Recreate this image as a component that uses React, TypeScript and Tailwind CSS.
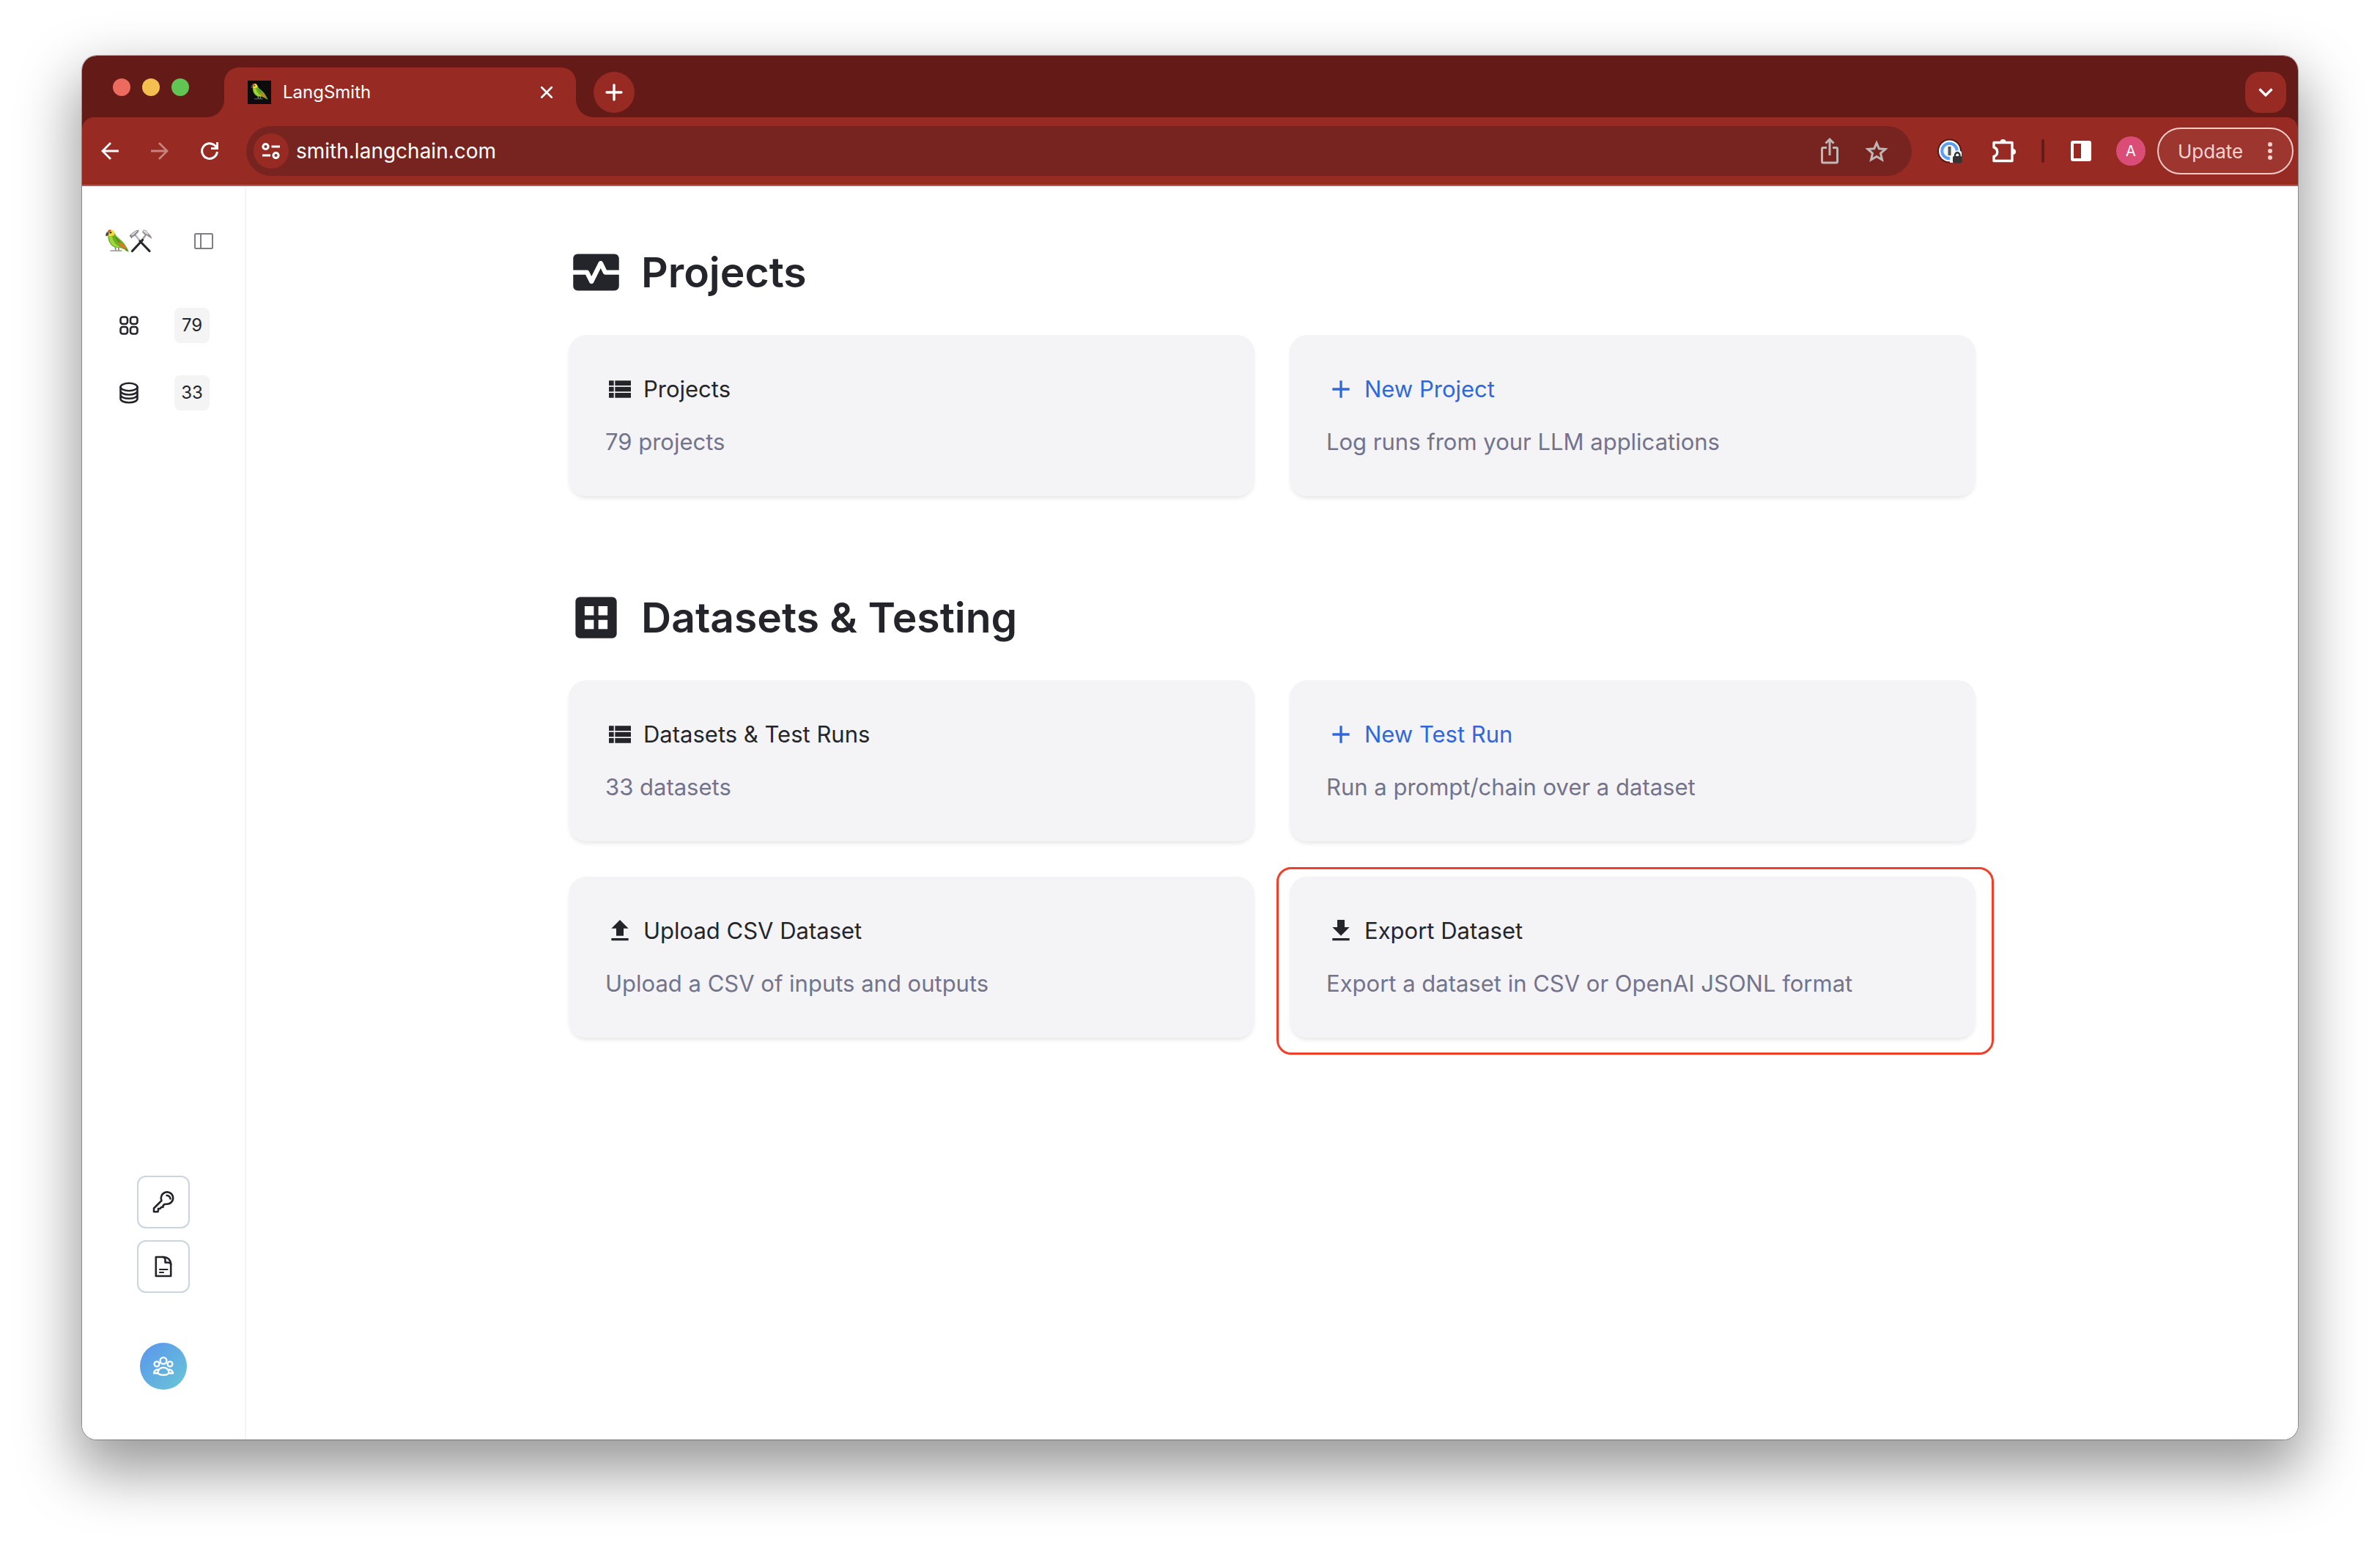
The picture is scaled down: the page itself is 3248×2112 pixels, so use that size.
import { MdMonitorHeart, MdDataset, MdViewList, MdAdd, MdUpload, MdDownload } from "react-icons/md";
import type { ReactNode } from "react";

function ParrotShape() {
  return (
    <>
      <path d="M7 29.200H22" stroke="#7f8078" strokeWidth="1.200" strokeLinecap="round" />
      <path d="M13 22L14 28.500M18 23V28.500" stroke="#8d8c7c" strokeWidth="1.800" />
      <path d="M3.500 8C3 12 4 17 7.500 21C10 24 14 25.500 20 25L26 27.500L31.500 30.500C31 27 28 23 25 18.500C22 14.500 17 11.500 14.500 8.500C13 6 11 1 7 .8Z" fill="#6cb022" />
      <path d="M5 10C5 15 7 19 10 21.500C13 24 17 24.500 20 24C14 21 10 16 9 10Z" fill="#a2d83a" />
      <path d="M12 9C15 14 19 19 24 24C22 18 17 13 12 9Z" fill="#4a8d17" />
      <path d="M17.500 17C21 18 25 20.500 28 25.500L28.500 27.500L24 26C21 24 18.500 21 17.500 17Z" fill="#e2762a" />
      <path d="M26.500 26L29 26.500L31.800 30.800L27.500 29Z" fill="#4c9a20" />
      <path d="M3 3C4 1 6 .2 8 .6C11 1.200 12.500 4 12.500 6.500C11 9 7 10.500 4 9Z" fill="#f0dc3c" />
      <path d="M3.200 1.800C4.500 .4 6.500 .2 7.600 .8L6 3.200L3 3.500Z" fill="#d8452d" />
      <path d="M3.500 3.500C1 3.500 0 5.500 .3 9C1.500 9.500 3 9 4.200 7.500L4.600 4Z" fill="#4d4a4a" />
      <circle cx="7" cy="4.200" r="1.300" fill="#33302a" />
    </>
  );
}

function Hammers() {
  return (
    <svg viewBox="0 0 32 32" className="size-8" fill="none" aria-hidden="true">
      <path d="M24 6L16 17" stroke="#9b9da1" strokeWidth="2.400" />
      <path d="M18.500 14.500L4.500 29.500" stroke="#26272b" strokeWidth="3.200" strokeLinecap="round" />
      <path d="M8 7L17 18" stroke="#b4b6ba" strokeWidth="2.400" />
      <path d="M15 16L28 29.500" stroke="#26272b" strokeWidth="3.200" strokeLinecap="round" />
      <path d="M.5 8.500L3 6L10 1L13.500 .8L13 3.500L10.500 6L8.500 8.500L5 10.500L3.500 12.500Z" fill="#85888d" />
      <path d="M2.500 7.500L10 1.800L12 1.800L5 8.500Z" fill="#dadbde" />
      <path d="M18 3.500L20 .5L23 1L27 5.500L30 9L31.500 13L27.500 10.500L24 8L20.500 6.500Z" fill="#948b8e" />
      <path d="M19.500 3L20.500 1.200L23 1.800L27 6.500L25 7Z" fill="#e0e1e4" />
    </svg>
  );
}

function TabStrip() {
  return (
    <div className="flex h-21 shrink-0 items-end bg-[#641a17] pr-4 pl-[42px]">
      <div className="flex h-full w-[128px] items-center gap-4 pt-[2px]">
        <button aria-label="Close window" className="size-6 rounded-full bg-[#ed6a5e]" />
        <button aria-label="Minimize window" className="size-6 rounded-full bg-[#f5bf4f]" />
        <button aria-label="Zoom window" className="size-6 rounded-full bg-[#61c554]" />
      </div>
      <svg viewBox="0 0 24 24" className="size-6" aria-hidden="true">
        <path d="M24 0V24H0A24 24 0 0 0 24 0Z" fill="#982a24" />
      </svg>
      <div className="flex h-17 w-[480px] items-center rounded-t-[20px] bg-[#982a24] pr-6 pl-8">
        <svg viewBox="-6 -5 44 44" className="size-8 bg-[#0c0c0c]" aria-hidden="true">
          <ParrotShape />
        </svg>
        <span className="ml-4 grow text-2xl text-white">LangSmith</span>
        <button aria-label="Close tab" className="flex size-8 items-center justify-center">
          <svg viewBox="0 0 16 16" className="size-4" fill="none" stroke="#fff" strokeWidth="2.600" strokeLinecap="round">
            <path d="M1 1L15 15M15 1L1 15" />
          </svg>
        </button>
      </div>
      <svg viewBox="0 0 24 24" className="size-6" aria-hidden="true">
        <path d="M0 0V24H24A24 24 0 0 1 0 0Z" fill="#982a24" />
      </svg>
      <button aria-label="New tab" className="mb-[6px] flex size-14 items-center justify-center rounded-full bg-[#982a24]">
        <svg viewBox="0 0 24 24" className="size-6" fill="none" stroke="#fff" strokeWidth="3.400" strokeLinecap="round">
          <path d="M12 2V22M2 12H22" />
        </svg>
      </button>
      <button aria-label="Search tabs" className="mb-[6px] ml-auto flex size-14 items-center justify-center rounded-[20px] bg-[#982a24]">
        <svg viewBox="0 0 20 12" className="h-3 w-5" fill="none" stroke="#fff" strokeWidth="3.200">
          <path d="M1.500 1.500L10 10L18.500 1.500" />
        </svg>
      </button>
    </div>
  );
}

function Toolbar() {
  return (
    <div className="shrink-0 bg-[#641a17]">
      <div className="flex h-[94px] items-center rounded-t-[16px] border-b-2 border-[#b55a57] bg-[#982a24] pr-[6px] pl-[18px]">
        <div className="flex items-center gap-7 text-white">
          <button aria-label="Back" className="flex size-10 items-center justify-center">
            <svg viewBox="0 0 24 24" className="size-6" fill="none" stroke="currentColor" strokeWidth="2.800">
              <path d="M24 12H2M13 1L2 12L13 23" />
            </svg>
          </button>
          <button aria-label="Forward" className="flex size-10 items-center justify-center text-[#c8827e]">
            <svg viewBox="0 0 24 24" className="size-6" fill="none" stroke="currentColor" strokeWidth="2.800">
              <path d="M0 12H22M11 1L22 12L11 23" />
            </svg>
          </button>
          <button aria-label="Reload" className="flex size-10 items-center justify-center">
            <svg viewBox="0 0 24 24" className="size-6" fill="none" stroke="currentColor" strokeWidth="3">
              <path d="M22.400 13A10.400 10.400 0 1 1 19.500 4.800L22.400 8M22.500 0V8.500H14" />
            </svg>
          </button>
        </div>
        <div className="ml-[30px] flex h-17 grow items-center rounded-full bg-[#772421] pr-7 pl-[10px]">
          <button aria-label="Site information" className="flex size-12 items-center justify-center rounded-full bg-[#982a24]">
            <svg viewBox="0 0 26 22" className="h-[22px] w-[26px]" fill="none" stroke="#fff" strokeWidth="3">
              <circle cx="5.500" cy="5" r="3.600" />
              <circle cx="19.500" cy="17" r="3.600" />
              <path d="M13.500 5H25M1 17H12" />
            </svg>
          </button>
          <input
            aria-label="Address"
            defaultValue="smith.langchain.com"
            className="ml-[10px] min-w-0 grow bg-transparent text-[28px] text-white outline-none"
          />
          <div className="flex items-center gap-6 text-[#bfb7b5]">
            <button aria-label="Share" className="flex size-10 items-center justify-center">
              <svg viewBox="0 0 26 36" className="h-9 w-[26px]" fill="none" stroke="currentColor" strokeWidth="3">
                <path d="M9 13.500H4Q2.500 13.500 2.500 15V32.500Q2.500 34 4 34H22Q23.500 34 23.500 32.500V15Q23.500 13.500 22 13.500H17M13 24V3M7.500 7.500L13 2L18.500 7.500" />
              </svg>
            </button>
            <button aria-label="Bookmark" className="flex size-10 items-center justify-center">
              <svg viewBox="0 0 32 32" className="size-8" fill="none" stroke="currentColor" strokeWidth="3">
                <path d="M16 5L19.300 12.800L28 13.500L21.500 19.200L23.500 28L16 23.500L8.500 28L10.500 19.200L4 13.500L12.700 12.800Z" />
              </svg>
            </button>
          </div>
        </div>
        <div className="ml-8 flex items-center">
          <button aria-label="Password manager" className="flex size-10 items-center justify-center">
            <svg viewBox="0 0 34 34" className="size-[34px]">
              <circle cx="16.500" cy="17" r="16.500" fill="#5a1613" />
              <circle cx="16.500" cy="17" r="14.500" fill="#fff" />
              <circle cx="16.500" cy="17" r="10.300" fill="#f4f6f8" stroke="#5c9df5" strokeWidth="4" />
              <path d="M17 17H24Q32 15 33 19V33H17Z" fill="#f4f6f8" />
              <rect x="14.500" y="11" width="4" height="12" fill="#555" />
              <rect x="21" y="24" width="12.500" height="9.500" rx="2" fill="#333" />
              <path d="M24 24.500V22.500A3.200 3.200 0 0 1 30.400 22.500V24.500" fill="none" stroke="#333" strokeWidth="2.400" />
            </svg>
          </button>
          <button aria-label="Extensions" className="ml-[34px] flex size-10 items-center justify-center">
            <svg viewBox="0 0 34 34" className="size-[34px]" fill="none" stroke="#fff" strokeWidth="3.400" strokeLinejoin="round">
              <path d="M3 5.500H28V30.500H3V24.500A6.500 6.500 0 0 0 3 12Z" />
              <path d="M11.500 5A4 4 0 0 1 19.500 5ZM29 14A4 4 0 0 1 29 22Z" fill="#fff" stroke="none" />
            </svg>
          </button>
          <div className="ml-[31px] h-8 w-1 rounded-full bg-[#641a17]" />
          <button aria-label="Side panel" className="ml-[30px] flex size-10 items-center justify-center">
            <svg viewBox="0 0 28 28" className="size-7">
              <path fillRule="evenodd" d="M3 0H25Q28 0 28 3V25Q28 28 25 28H3Q0 28 0 25V3Q0 0 3 0ZM4 4V24H14V4Z" fill="#fff" />
            </svg>
          </button>
          <button className="ml-7 flex size-10 items-center justify-center rounded-full bg-[#d94d77] text-xl text-white">A</button>
          <button className="ml-4 flex h-16 w-[186px] items-center justify-between rounded-full border-2 border-[#f4cbc8] bg-[#9e3630] pr-[27px] pl-[26px] text-[26px] text-[#f7d3d0]">
            Update
            <svg viewBox="0 0 6 24" className="h-6 w-[6px]" fill="currentColor" aria-hidden="true">
              <circle cx="3" cy="3" r="3" />
              <circle cx="3" cy="12" r="3" />
              <circle cx="3" cy="21" r="3" />
            </svg>
          </button>
        </div>
      </div>
    </div>
  );
}

function NavLink({ label, count, children }: { label: string; count: number; children: ReactNode }) {
  return (
    <a href="#" aria-label={label} className="flex items-center justify-between">
      <svg viewBox="0 0 32 32" className="size-8" fill="none" stroke="#24252b" strokeWidth="2.600" strokeLinecap="round" strokeLinejoin="round">
        {children}
      </svg>
      <span className="flex size-12 items-center justify-center rounded-lg bg-[#f4f4f4] text-2xl text-[#24252b]">{count}</span>
    </a>
  );
}

function Sidebar() {
  return (
    <aside className="flex w-[224px] shrink-0 flex-col border-r-2 border-[#f1f4f9] pt-[59px] pb-[68px]">
      <div className="flex items-center justify-between pr-[42px] pl-8">
        <a href="#" aria-label="Home" className="flex">
          <svg viewBox="0 0 32 32" className="size-8" fill="none" aria-hidden="true">
            <ParrotShape />
          </svg>
          <Hammers />
        </a>
        <button aria-label="Collapse sidebar">
          <svg viewBox="0 0 28 24" className="h-6 w-7" fill="none" stroke="#7d7d86" strokeWidth="2">
            <rect x="2" y="2" width="24" height="20" rx="1.500" />
            <path d="M10 2V22" />
          </svg>
        </button>
      </div>
      <nav className="mt-[75px] flex flex-col gap-11 px-12">
        <NavLink label="Projects" count={79}>
          <rect x="4.500" y="4.500" width="9.500" height="9.500" rx="3" />
          <rect x="18" y="4.500" width="9.500" height="9.500" rx="3" />
          <rect x="4.500" y="18" width="9.500" height="9.500" rx="3" />
          <rect x="18" y="18" width="9.500" height="9.500" rx="3" />
        </NavLink>
        <NavLink label="Datasets" count={33}>
          <ellipse cx="16" cy="8" rx="11.500" ry="5.200" />
          <path d="M4.500 8V24C4.500 27 9.500 29.200 16 29.200S27.500 27 27.500 24V8M4.500 13.300C4.500 16.300 9.500 18.500 16 18.500S27.500 16.300 27.500 13.300M4.500 18.600C4.500 21.600 9.500 23.800 16 23.800S27.500 21.600 27.500 18.600" />
        </NavLink>
      </nav>
      <div className="mt-auto flex flex-col items-center">
        <button aria-label="API keys" className="flex size-18 items-center justify-center rounded-xl border-2 border-[#cbd5e1]">
          <svg viewBox="0 0 32 32" className="size-8" fill="none" stroke="#24252b" strokeWidth="2.600" strokeLinejoin="round" strokeLinecap="round">
            <path d="M3 29.200V24.500L13.500 14A8.200 8.200 0 1 1 21 18.800L17.500 19L15.500 21V23H13L11.500 25H9V27L8.500 29.200Z" />
            <path d="M20.500 7Q25 7.500 25.500 11.500" />
          </svg>
        </button>
        <button aria-label="Documentation" className="mt-4 flex size-18 items-center justify-center rounded-xl border-2 border-[#cbd5e1]">
          <svg viewBox="0 0 32 32" className="size-8" fill="none" stroke="#24252b" strokeWidth="2.600" strokeLinejoin="round" strokeLinecap="round">
            <path d="M5.800 3H15C22 3 26 7 26.200 13V29H5.800Z" />
            <path d="M15 3C18 3 18.500 4.500 18.500 7V10.500H22C24.500 10.500 26 11 26.200 13" />
            <path d="M11 20H21.500M11 24H16" strokeWidth="2.200" />
          </svg>
        </button>
        <button aria-label="Organization" className="mt-17 flex size-16 items-center justify-center rounded-full bg-linear-to-br from-[#5b93ee] to-[#6ac7d3]">
          <svg viewBox="0 0 32 32" className="size-8" fill="none" stroke="#fff" strokeWidth="2.400" strokeLinejoin="round">
            <circle cx="16" cy="8.500" r="4.400" />
            <circle cx="7" cy="13" r="3.400" />
            <circle cx="25" cy="13" r="3.400" />
            <path d="M8.500 25.500C8.500 21 11.500 17.700 16 17.700S23.500 21 23.500 25.500C20.500 28.800 11.500 28.800 8.500 25.500ZM9.500 20.700C5.500 20.500 3 22.500 3 25.500H8.500M22.500 20.700C26.500 20.500 29 22.500 29 25.500H23.500" />
          </svg>
        </button>
      </div>
    </aside>
  );
}

function Card({ icon, title, text, accent, marked }: { icon: ReactNode; title: string; text: string; accent?: boolean; marked?: boolean }) {
  return (
    <a href="#" className="relative flex flex-col gap-6 rounded-3xl bg-[#f4f4f7] p-[50px] text-[31px] leading-12 shadow-[0_4px_6px_-2px_rgba(0,0,0,0.12)]">
      <span className={accent ? "flex items-center gap-3 text-[#2f69d9]" : "flex items-center gap-3 text-[#24252b]"}>
        {icon}
        {title}
      </span>
      <span className="text-[#73738c]">{text}</span>
      {marked && (
        <span className="pointer-events-none absolute -top-[13px] -right-[25px] -bottom-[23px] -left-[18px] rounded-[20px] border-3 border-[#ee402a]" />
      )}
    </a>
  );
}

function Section({ icon, title, children }: { icon: ReactNode; title: string; children: ReactNode }) {
  return (
    <section className="text-[#24252b]">
      <h2 className="flex items-center gap-6 text-[57px] leading-[75px] font-semibold">
        {icon}
        {title}
      </h2>
      <div className="mt-12 grid grid-cols-2 gap-12">{children}</div>
    </section>
  );
}

export default function App() {
  return (
    <div className="flex h-screen bg-white px-[112px] pt-[76px] pb-[148px] font-[Inter,sans-serif]">
      <div className="flex min-w-0 grow rounded-[20px] shadow-[0_0_0_1px_rgba(0,0,0,0.3),0_36px_80px_8px_rgba(0,0,0,0.4)]">
        <div className="flex min-w-0 grow flex-col overflow-hidden rounded-[20px] bg-white">
          <TabStrip />
          <Toolbar />
          <div className="flex min-h-0 grow">
            <Sidebar />
            <main className="grow pt-20">
              <div className="mx-auto flex w-full max-w-[1920px] flex-col gap-32">
                <Section icon={<MdMonitorHeart className="size-[75px]" />} title="Projects">
                  <Card icon={<MdViewList className="size-10" />} title="Projects" text="79 projects" />
                  <Card icon={<MdAdd className="size-10" />} title="New Project" text="Log runs from your LLM applications" accent />
                </Section>
                <Section icon={<MdDataset className="size-[75px]" />} title="Datasets & Testing">
                  <Card icon={<MdViewList className="size-10" />} title="Datasets & Test Runs" text="33 datasets" />
                  <Card icon={<MdAdd className="size-10" />} title="New Test Run" text="Run a prompt/chain over a dataset" accent />
                  <Card icon={<MdUpload className="size-10" />} title="Upload CSV Dataset" text="Upload a CSV of inputs and outputs" />
                  <Card icon={<MdDownload className="size-10" />} title="Export Dataset" text="Export a dataset in CSV or OpenAI JSONL format" marked />
                </Section>
              </div>
            </main>
          </div>
        </div>
      </div>
    </div>
  );
}
